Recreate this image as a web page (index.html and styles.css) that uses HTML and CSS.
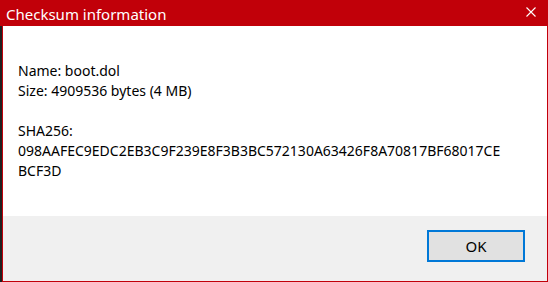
FILE: index.html
```html
<!DOCTYPE html>
<html>
<head>
<meta charset="utf-8">
<link rel="stylesheet" href="styles.css">
</head>
<body>
<div class="window">
  <div class="titlebar">
    <span class="title">Checksum information</span>
    <span class="close"><svg width="10" height="10" viewBox="0 0 10 10"><path d="M0.5 0.5 L9.5 9.5 M9.5 0.5 L0.5 9.5" stroke="#fff" stroke-width="1.1" fill="none"/></svg></span>
  </div>
  <div class="content">
    <div class="line">Name: boot.dol</div>
    <div class="line">Size: 4909536 bytes (4 MB)</div>
    <div class="line blank">&nbsp;</div>
    <div class="line">SHA256:</div>
    <div class="line">098AAFEC9EDC2EB3C9F239E8F3B3BC572130A63426F8A70817BF68017CE</div>
    <div class="line">BCF3D</div>
  </div>
  <div class="footer">
    <button class="ok">OK</button>
  </div>
</div>
</body>
</html>
```
FILE: styles.css
```css
html, body {
  margin: 0;
  padding: 0;
  background: #1f1f1f;
  width: 548px;
  height: 282px;
  overflow: hidden;
}
.window {
  margin-left: 2px;
  width: 544px;
  height: 281px;
  border: 1px solid #c1000a;
  border-top: none;
  background: #fff;
  display: flex;
  flex-direction: column;
  font-family: "Noto Sans", "Open Sans", sans-serif;
}
.titlebar {
  height: 26px;
  margin-left: -3px;
  margin-right: -1px;
  background: #c10009;
  display: flex;
  align-items: center;
  justify-content: space-between;
  padding: 0 12px 0 6px;
  color: #fff;
}
.title {
  font-size: 15px;
  line-height: 26px;
  padding-top: 1px;
}
.close {
  display: flex;
  margin-top: -2px;
}
.content {
  flex: 1;
  padding: 35px 0 0 15px;
  font-size: 14px;
  line-height: 20px;
  color: #000;
}
.footer {
  height: 65px;
  background: #f0f0f0;
  display: flex;
  justify-content: flex-end;
  align-items: flex-start;
  padding: 14px 22px 0 0;
  box-sizing: border-box;
}
.ok {
  width: 98px;
  height: 32px;
  border: 2px solid #0078d7;
  background: #e1e1e1;
  font-family: "Noto Sans", "Open Sans", sans-serif;
  font-size: 15px;
  color: #000;
  padding: 0;
  margin: 0;
}
```
